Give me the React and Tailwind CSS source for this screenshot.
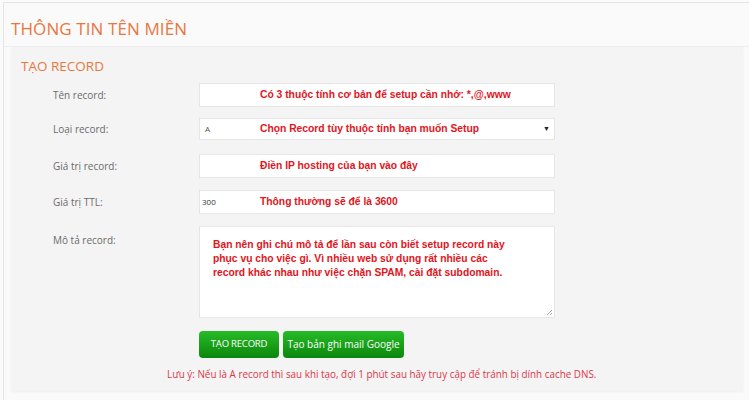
import React from 'react';

const labelCls = "w-[188px] shrink-0 pl-[42px] text-[10px] text-[#6b6b6b]";
const noteCls = "font-['Liberation_Sans',Arial,sans-serif] font-bold text-[10.3px] text-[#e3141c]";

function Row({ label, children, className = "" }) {
  return (
    <div className={`flex items-center ${className}`}>
      <div className={labelCls}>{label}</div>
      {children}
    </div>
  );
}

export default function App() {
  return (
    <div className="w-[749px] h-[400px] overflow-hidden bg-[#fafafa] font-['Open_Sans',sans-serif]">
      <div className="ml-[3px] mt-[2px] h-[398px] border-l border-t border-[#e6e6e6]">
        {/* Header */}
        <div className="h-[44px] pt-[14px] pl-[7px] border-b border-[#ededed]">
          <h1 className="text-[17px] leading-[24px] text-[#e8773f] tracking-[0.1px]">THÔNG TIN TÊN MIỀN</h1>
        </div>

        {/* Panel */}
        <div className="ml-[7px] mr-[6px] h-[344px] bg-[#f4f4f4] shadow-[0_1px_2px_rgba(0,0,0,0.05)]">
          <h2 className="pl-[10px] pt-[10px] text-[13.5px] leading-[18px] text-[#e8773f]">TẠO RECORD</h2>

          <div className="mt-[8px]">
            <Row label="Tên record:">
              <div className="w-[356px] h-[24px] bg-white border border-[#e6e6e6] flex items-center">
                <span className={`${noteCls} ml-[60px]`}>Có 3 thuộc tính cơ bản để setup cần nhớ: *,@,www</span>
              </div>
            </Row>

            <Row label="Loại record:" className="mt-[11px]">
              <div className="w-[356px] h-[22px] bg-white border border-[#e6e6e6] flex items-center">
                <span className="ml-[5px] w-[55px] text-[8px] text-[#555]">A</span>
                <span className={noteCls}>Chọn Record tùy thuộc tính bạn muốn Setup</span>
                <span className="ml-auto mr-[4px] text-[7px] text-[#222]">▼</span>
              </div>
            </Row>

            <Row label="Giá trị record:" className="mt-[14px]">
              <div className="w-[356px] h-[24px] bg-white border border-[#e6e6e6] flex items-center">
                <span className={`${noteCls} ml-[60px]`}>Điền IP hosting của bạn vào đây</span>
              </div>
            </Row>

            <Row label="Giá trị TTL:" className="mt-[12px]">
              <div className="w-[356px] h-[24px] bg-white border border-[#e6e6e6] flex items-center">
                <span className="ml-[2px] w-[58px] text-[8px] text-[#333]">300</span>
                <span className={noteCls}>Thông thường sẽ để là 3600</span>
              </div>
            </Row>

            <div className="flex mt-[12px]">
              <div className={`${labelCls} pt-[7px]`}>Mô tả record:</div>
              <div className="relative w-[356px] h-[92px] bg-white border border-[#e6e6e6] pl-[13px] pt-[11px]">
                <p className={`${noteCls} leading-[14px] w-[305px]`}>
                  Bạn nên ghi chú mô tả để lần sau còn biết setup record này phục vụ cho việc gì. Vì nhiều web sử dụng rất nhiều các record khác nhau như việc chặn SPAM, cài đặt subdomain.
                </p>
                <svg className="absolute right-[1px] bottom-[1px]" width="7" height="7" viewBox="0 0 7 7">
                  <path d="M6 1 L1 6 M6 4 L4 6" stroke="#aaa" strokeWidth="1" />
                </svg>
              </div>
            </div>

            <div className="flex mt-[13px] pl-[188px] gap-[4px]">
              <button className="w-[80px] h-[27px] rounded-[4px] bg-gradient-to-b from-[#27bb27] to-[#0a880a] text-white text-[9.5px] tracking-[-0.2px]">
                TẠO RECORD
              </button>
              <button className="w-[121px] h-[27px] rounded-[4px] bg-gradient-to-b from-[#27bb27] to-[#0a880a] text-white text-[10px]">
                Tạo bản ghi mail Google
              </button>
            </div>

            <p className="mt-[9px] pl-[156px] text-[9.9px] text-[#e0364a]">
              Lưu ý: Nếu là A record thì sau khi tạo, đợi 1 phút sau hãy truy cập để tránh bị dính cache DNS.
            </p>
          </div>
        </div>
      </div>
    </div>
  );
}
